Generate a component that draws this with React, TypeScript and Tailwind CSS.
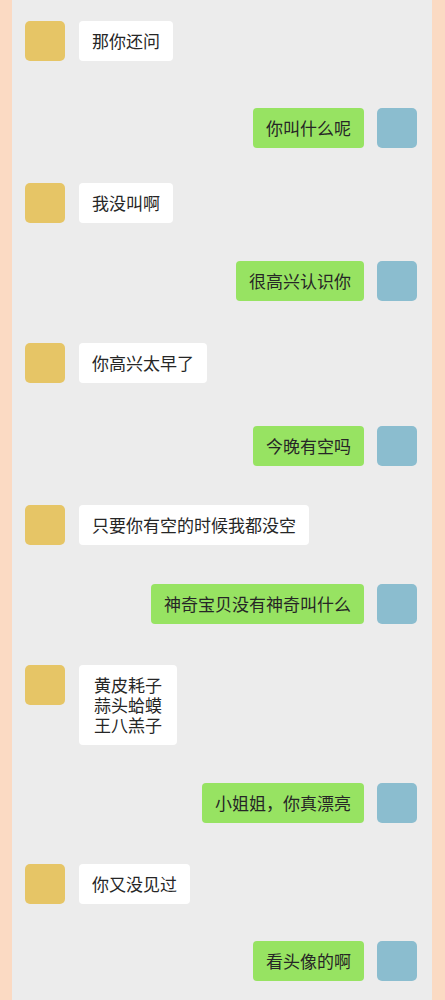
import React from 'react';

type Msg = { side: 'left' | 'right'; lines: string[]; mt: string };

// top margins measured off the reference, written out in full for tailwind
const messages: Msg[] = [
  { side: 'left', lines: ['那你还问'], mt: 'mt-[21px]' },
  { side: 'right', lines: ['你叫什么呢'], mt: 'mt-[47px]' },
  { side: 'left', lines: ['我没叫啊'], mt: 'mt-[35px]' },
  { side: 'right', lines: ['很高兴认识你'], mt: 'mt-[38px]' },
  { side: 'left', lines: ['你高兴太早了'], mt: 'mt-[42px]' },
  { side: 'right', lines: ['今晚有空吗'], mt: 'mt-[43px]' },
  { side: 'left', lines: ['只要你有空的时候我都没空'], mt: 'mt-[39px]' },
  { side: 'right', lines: ['神奇宝贝没有神奇叫什么'], mt: 'mt-[39px]' },
  { side: 'left', lines: ['黄皮耗子', '蒜头蛤蟆', '王八羔子'], mt: 'mt-[41px]' },
  { side: 'right', lines: ['小姐姐，你真漂亮'], mt: 'mt-[38px]' },
  { side: 'left', lines: ['你又没见过'], mt: 'mt-[41px]' },
  { side: 'right', lines: ['看头像的啊'], mt: 'mt-[37px]' },
];

const Avatar = ({ side }: { side: 'left' | 'right' }) => (
  <div
    className={`w-10 h-10 shrink-0 rounded-[5px] ${
      side === 'left' ? 'bg-[#e6c566]' : 'bg-[#8bbdcf]'
    }`}
  />
);

const Bubble = ({ side, lines }: { side: 'left' | 'right'; lines: string[] }) => (
  <div
    className={`rounded-[4px] px-[13px] py-[10px] text-[17px] leading-[20px] text-[#262626] ${
      side === 'left' ? 'bg-white' : 'bg-[#97e362]'
    }`}
  >
    {lines.map((l, i) => (
      <div key={i} className={lines.length > 1 ? 'pl-[2px] pr-[2px]' : ''}>
        {l}
      </div>
    ))}
  </div>
);

export default function App() {
  return (
    <div
      className="w-full min-h-screen bg-[#fbdac3]"
      style={{ fontFamily: '"Noto Sans CJK SC", "Noto Sans", sans-serif' }}
    >
      <div className="ml-[12px] w-[420px] h-[1000px] overflow-hidden bg-[#ececec] pl-[13px] pr-[15px]">
        {messages.map((m, i) =>
          m.side === 'left' ? (
            <div key={i} className={`flex items-start gap-[14px] ${m.mt}`}>
              <Avatar side="left" />
              <Bubble side="left" lines={m.lines} />
            </div>
          ) : (
            <div key={i} className={`flex items-start justify-end gap-[13px] ${m.mt}`}>
              <Bubble side="right" lines={m.lines} />
              <Avatar side="right" />
            </div>
          )
        )}
      </div>
    </div>
  );
}
